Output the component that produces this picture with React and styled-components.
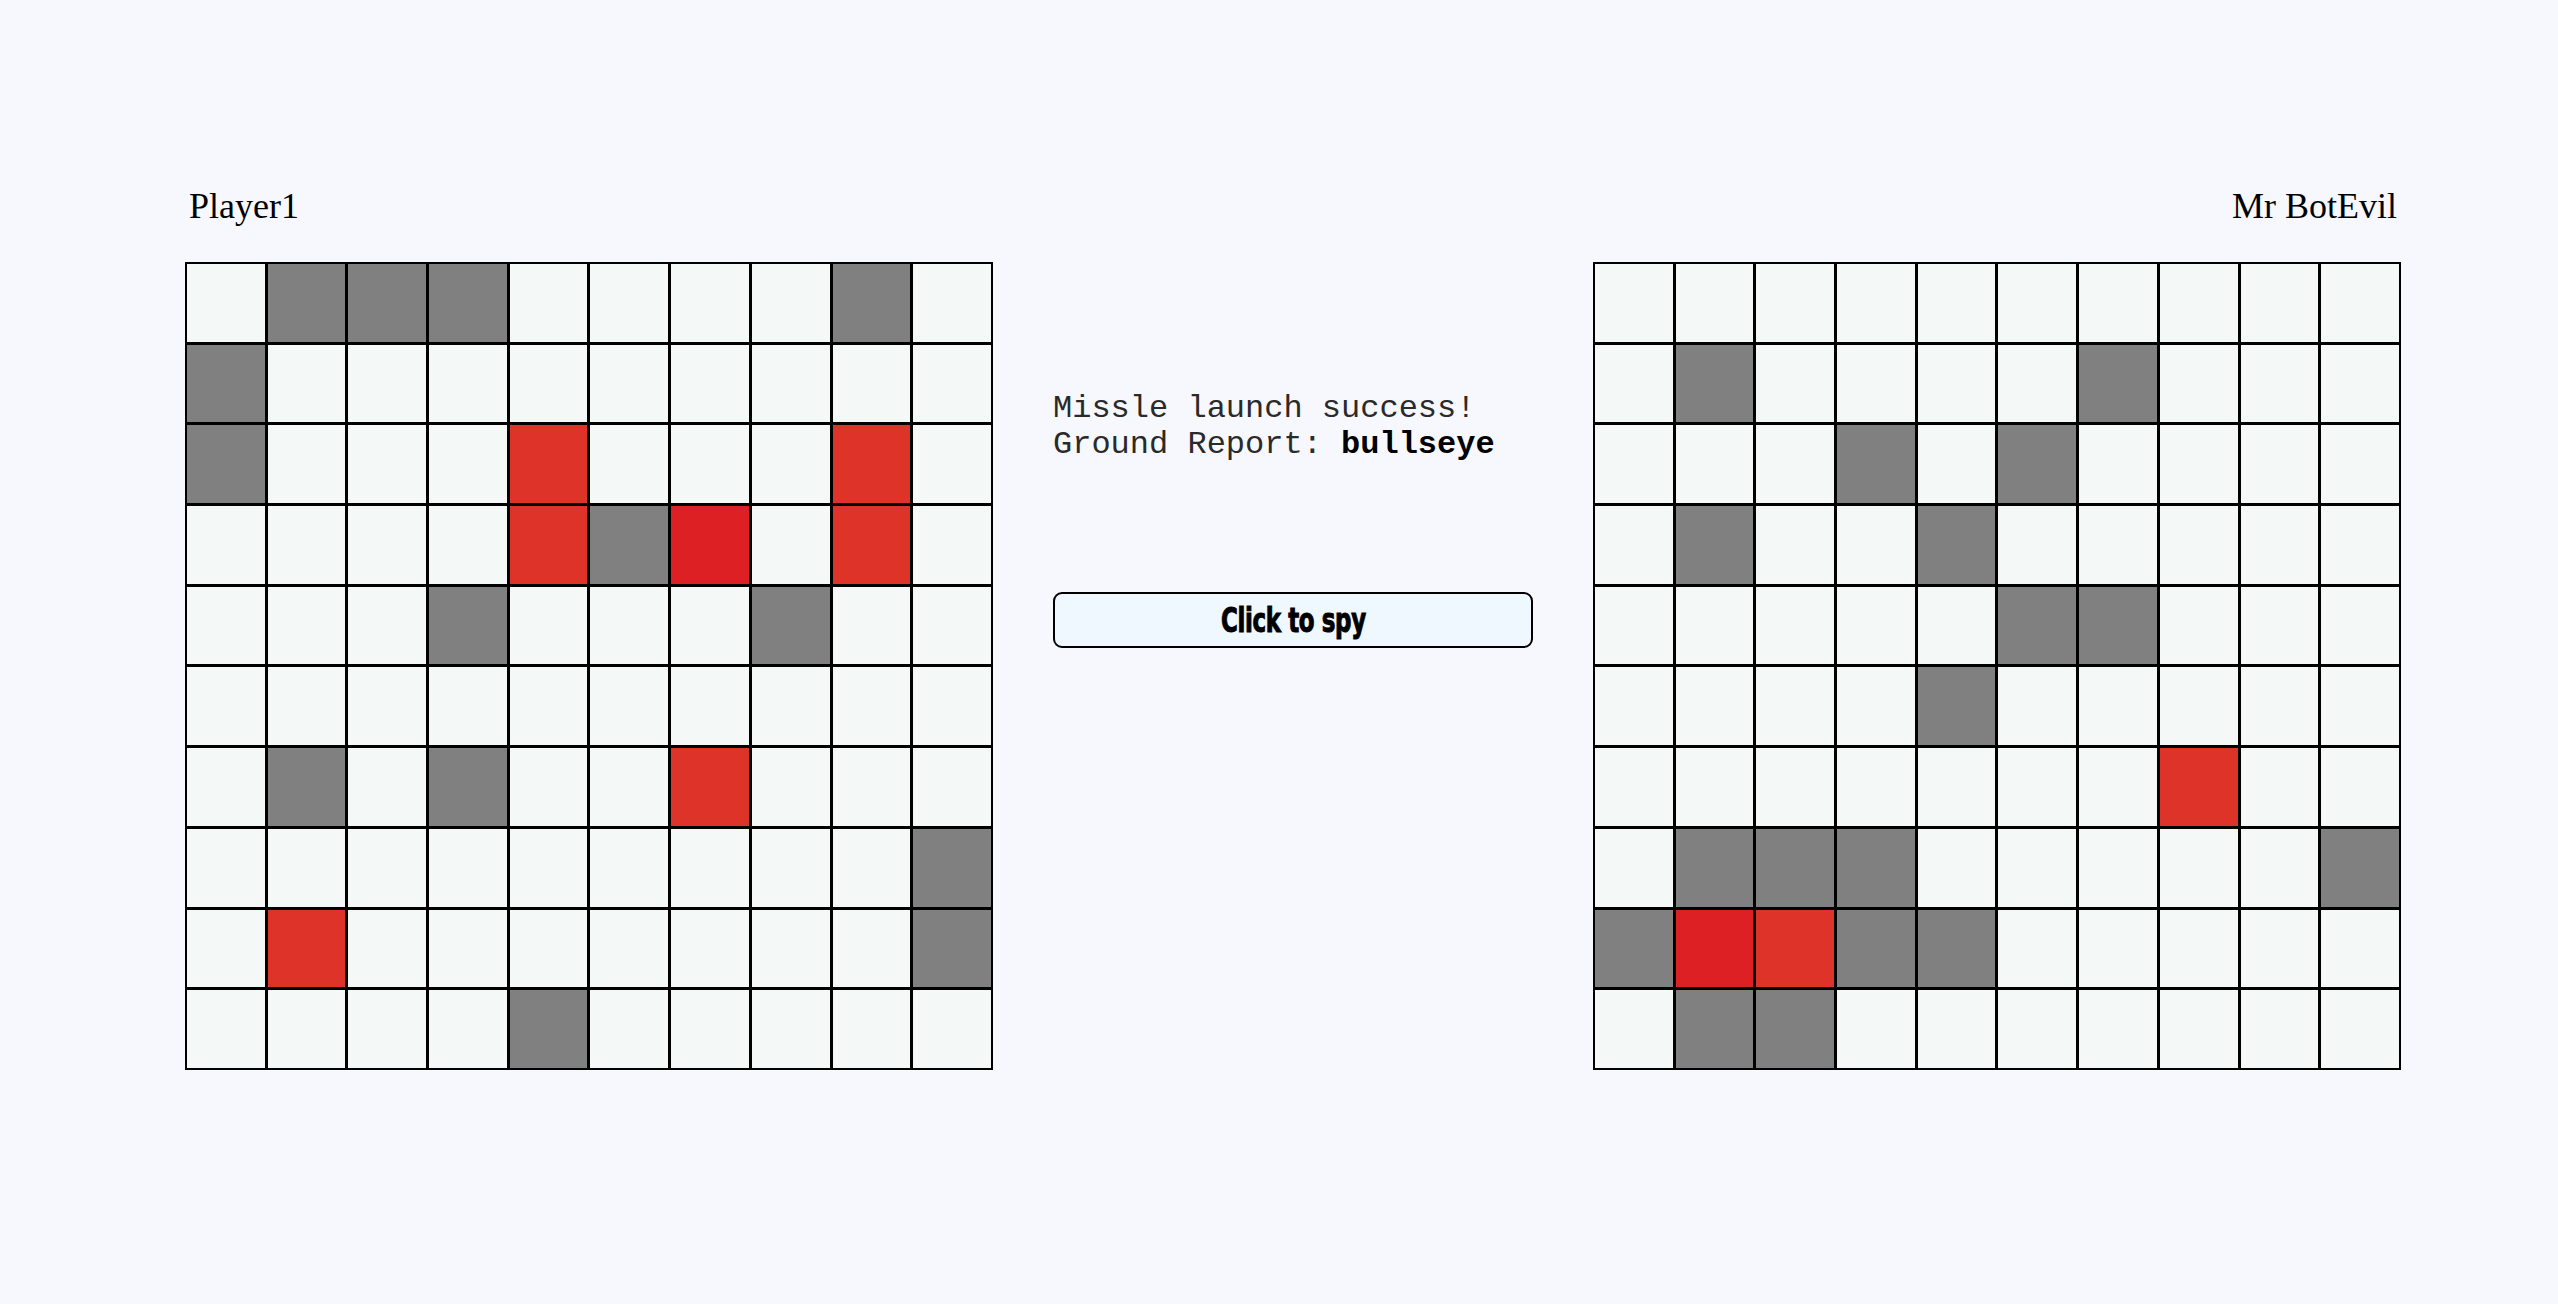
import React from "react";
import styled, { createGlobalStyle } from "styled-components";

const GlobalStyle = createGlobalStyle`
  html, body {
    margin: 0;
    padding: 0;
    background: #f7f8fe;
  }
  body {
    font-family: "Liberation Serif", "Times New Roman", serif;
  }
`;

const Page = styled.main`
  display: flex;
  align-items: flex-start;
  gap: 60px;
  padding: 186px 0 0 185px;
  min-height: 1304px;
  box-sizing: border-box;
`;

const BoardColumn = styled.section`
  display: flex;
  flex-direction: column;
  width: 808px;
`;

const PlayerName = styled.h2`
  margin: 0 0 36px;
  padding: 0 4px;
  font-family: "Liberation Serif", "Times New Roman", serif;
  font-weight: normal;
  font-size: 36px;
  line-height: 40px;
  color: #000;
  text-align: ${(p) => (p.$align === "right" ? "right" : "left")};
`;

const Board = styled.div`
  display: grid;
  grid-template-columns: repeat(10, 1fr);
  gap: 3px;
  padding: 2px;
  background: #000;
  width: 808px;
  height: 808px;
  box-sizing: border-box;
`;

const CELL_COLORS = {
  ".": "#f4f8f6",
  g: "#808080",
  r: "#de3329",
  R: "#dd2024",
};

const Cell = styled.div`
  background: ${(p) => CELL_COLORS[p.$state]};
`;

const Middle = styled.section`
  display: flex;
  flex-direction: column;
  width: 480px;
  padding-top: 205px;
`;

const Report = styled.p`
  margin: 0;
  font-family: "Liberation Mono", "Courier New", monospace;
  font-size: 32px;
  line-height: 36px;
  color: #2a2a2a;
  white-space: pre;
`;

const Strong = styled.strong`
  font-weight: bold;
  color: #000;
`;

const SpyButton = styled.button`
  margin-top: 129px;
  width: 480px;
  height: 56px;
  box-sizing: border-box;
  border: 2px solid #000;
  border-radius: 9px;
  background: #eff7ff;
  display: flex;
  align-items: center;
  justify-content: center;
  padding: 0;
  cursor: pointer;
`;

const SpyLabel = styled.span`
  display: inline-block;
  font-family: "DejaVu Sans Condensed", "DejaVu Sans", sans-serif;
  font-weight: bold;
  font-size: 34px;
  line-height: 1;
  color: #000;
  letter-spacing: -0.5px;
  -webkit-text-stroke: 1px #000;
  transform: scaleX(0.75);
`;

const playerBoard = [
  ".ggg....g.",
  "g.........",
  "g...r...r.",
  "....rgR.r.",
  "...g...g..",
  "..........",
  ".g.g..r...",
  ".........g",
  ".r.......g",
  "....g.....",
];

const botBoard = [
  "..........",
  ".g....g...",
  "...g.g....",
  ".g..g.....",
  ".....gg...",
  "....g.....",
  ".......r..",
  ".ggg.....g",
  "gRrgg.....",
  ".gg.......",
];

function Grid({ rows }) {
  return (
    <Board>
      {rows.map((row, y) =>
        row.split("").map((c, x) => <Cell key={`${y}-${x}`} $state={c} />)
      )}
    </Board>
  );
}

export default function App() {
  return (
    <>
      <GlobalStyle />
      <Page>
        <BoardColumn>
          <PlayerName>Player1</PlayerName>
          <Grid rows={playerBoard} />
        </BoardColumn>
        <Middle>
          <Report>Missle launch success!</Report>
          <Report>
            Ground Report: <Strong>bullseye</Strong>
          </Report>
          <SpyButton>
            <SpyLabel>Click to spy</SpyLabel>
          </SpyButton>
        </Middle>
        <BoardColumn>
          <PlayerName $align="right">Mr BotEvil</PlayerName>
          <Grid rows={botBoard} />
        </BoardColumn>
      </Page>
    </>
  );
}
